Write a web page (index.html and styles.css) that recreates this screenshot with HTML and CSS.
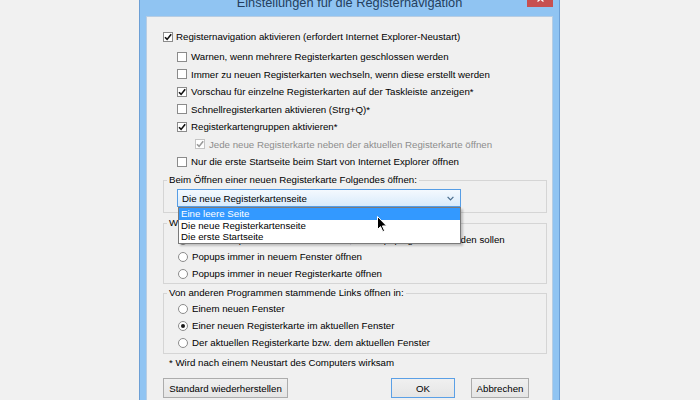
FILE: index.html
```html
<!DOCTYPE html>
<html lang="de">
<head>
    <meta charset="UTF-8">
    <title>Einstellungen für die Registernavigation</title>
    <link rel="stylesheet" href="styles.css">
</head>
<body>
    <div class="window">
        <div class="titlebar">
            <span></span>
            <h1 class="title">Einstellungen für die Registernavigation</h1>
            <span class="close">
                <svg width="7" height="6" viewBox="0 0 7 6"><path d="M0.5 0.5 L6.5 5.5 M6.5 0.5 L0.5 5.5" stroke="#fff" stroke-width="1.3"/></svg>
            </span>
        </div>

        <div class="panel">
            <ul class="options">
                <li class="opt first">
                    <span class="box"><svg width="8" height="8" viewBox="0 0 8 8"><path d="M1 4.2 L3.1 6.4 L7.2 1.2" /></svg></span>
                    Registernavigation aktivieren (erfordert Internet Explorer-Neustart)
                </li>
                <li class="opt sub"><span class="box"></span>Warnen, wenn mehrere Registerkarten geschlossen werden</li>
                <li class="opt sub"><span class="box"></span>Immer zu neuen Registerkarten wechseln, wenn diese erstellt werden</li>
                <li class="opt sub">
                    <span class="box"><svg width="8" height="8" viewBox="0 0 8 8"><path d="M1 4.2 L3.1 6.4 L7.2 1.2" /></svg></span>
                    Vorschau für einzelne Registerkarten auf der Taskleiste anzeigen*
                </li>
                <li class="opt sub"><span class="box"></span>Schnellregisterkarten aktivieren (Strg+Q)*</li>
                <li class="opt sub">
                    <span class="box"><svg width="8" height="8" viewBox="0 0 8 8"><path d="M1 4.2 L3.1 6.4 L7.2 1.2" /></svg></span>
                    Registerkartengruppen aktivieren*
                </li>
                <li class="opt subsub disabled">
                    <span class="box"><svg width="8" height="8" viewBox="0 0 8 8"><path d="M1 4.2 L3.1 6.4 L7.2 1.2" /></svg></span>
                    Jede neue Registerkarte neben der aktuellen Registerkarte öffnen
                </li>
                <li class="opt sub"><span class="box"></span>Nur die erste Startseite beim Start von Internet Explorer öffnen</li>
            </ul>

            <fieldset class="group tabs">
                <legend>Beim Öffnen einer neuen Registerkarte Folgendes öffnen:</legend>
                <div class="combo">
                    <div class="select">
                        <span>Die neue Registerkartenseite</span>
                        <svg width="7" height="5" viewBox="0 0 7 5"><path d="M0.6 0.8 L3.5 3.8 L6.4 0.8" /></svg>
                    </div>
                    <ul class="dropdown">
                        <li class="active">Eine leere Seite</li>
                        <li>Die neue Registerkartenseite</li>
                        <li>Die erste Startseite</li>
                    </ul>
                    <!-- Mauszeiger -->
                    <svg class="cursor" width="11" height="17" viewBox="0 0 11 17">
                        <path d="M0.5 0.5 L0.5 13.5 L3.5 10.6 L5.8 15.6 L7.6 14.8 L5.4 9.9 L9.6 9.9 Z" />
                    </svg>
                </div>
            </fieldset>

            <fieldset class="group popups">
                <legend>Wenn ein Popup auftritt:</legend>
                <div class="radio-row"><span class="radio checked"></span>Internet Explorer entscheiden lassen, wie Popups geöffnet werden sollen</div>
                <div class="radio-row"><span class="radio"></span>Popups immer in neuem Fenster öffnen</div>
                <div class="radio-row"><span class="radio"></span>Popups immer in neuer Registerkarte öffnen</div>
            </fieldset>

            <fieldset class="group links">
                <legend>Von anderen Programmen stammende Links öffnen in:</legend>
                <div class="radio-row"><span class="radio"></span>Einem neuen Fenster</div>
                <div class="radio-row"><span class="radio checked"></span>Einer neuen Registerkarte im aktuellen Fenster</div>
                <div class="radio-row"><span class="radio"></span>Der aktuellen Registerkarte bzw. dem aktuellen Fenster</div>
            </fieldset>

            <p class="note">* Wird nach einem Neustart des Computers wirksam</p>

            <div class="buttons">
                <button class="btn std">Standard wiederherstellen</button>
                <button class="btn ok">OK</button>
                <button class="btn cancel">Abbrechen</button>
            </div>
        </div>
    </div>
</body>
</html>
```

FILE: styles.css
```css
body {
    margin: 0;
    background: #f1f1f1;
    font-family: "Liberation Sans", Arial, sans-serif;
    font-size: 9.7px;
    color: #000;
    overflow: hidden;
}

/* Fensterrahmen */

.window {
    width: 421px;
    box-sizing: border-box;
    margin: -14px 0 0 139px;
    padding: 0 6px;
    background: #90c4f2;
    border: 1px solid #6c9fd5;
}

.titlebar {
    height: 29px;
    display: grid;
    grid-template-columns: 1fr auto 1fr;
    align-items: center;
}

.title {
    margin: 0;
    padding-top: 1px;
    font-size: 12.8px;
    font-weight: normal;
    line-height: 13px;
    color: #243f5e;
    white-space: nowrap;
}

.close {
    justify-self: end;
    align-self: end;
    width: 26px;
    height: 17px;
    margin-bottom: 9px;
    background: #c75050;
    display: flex;
    justify-content: center;
    align-items: center;
}

.panel {
    background: #f0f0f0;
    border: 1px solid #b7cde3;
    border-bottom: 0;
    padding: 11px 5px 20px 16px;
}

/* Checkboxen */

.options {
    list-style: none;
    margin: 0;
    padding: 0;
}

.opt {
    height: 17.5px;
    display: flex;
    align-items: center;
    gap: 4px;
    white-space: nowrap;

    &.first {
        margin-bottom: 2.5px;
        gap: 3px;
    }
    &.sub {
        padding-left: 14px;
    }
    &.subsub {
        padding-left: 32px;
    }
    &.disabled {
        color: #8d8d8d;

        .box {
            border-color: #c4c4c4;
        }
        .box path {
            stroke: #9a9a9a;
        }
    }
}

.box {
    width: 10px;
    height: 10px;
    box-sizing: border-box;
    flex: none;
    border: 1px solid #8b8b8b;
    background: #fff;
    display: flex;
    justify-content: center;
    align-items: center;

    path {
        fill: none;
        stroke: #111;
        stroke-width: 1.6;
    }
}

/* Gruppen */

.group {
    margin: 3.5px 0 0;
    padding: 3px 3px 5px;
    border: 1px solid #d5d5d5;
    min-inline-size: 0;

    legend {
        padding: 0 2px;
        line-height: 12px;
    }

    &.popups {
        margin-top: 4px;
        padding: 2px 3px 1px;
    }
    &.links {
        margin-top: 3px;
        padding: 1px 3px 2px;
    }
}

.combo {
    position: relative;
    width: 284px;
    margin-left: 10px;
}

.select {
    height: 18px;
    box-sizing: border-box;
    border: 1px solid #569de5;
    background: linear-gradient(#f4f9fe, #d9ebfb);
    display: flex;
    justify-content: space-between;
    align-items: center;
    padding: 0 6px 0 4px;

    path {
        fill: none;
        stroke: #4a6c8c;
        stroke-width: 1.2;
    }
}

.dropdown {
    position: absolute;
    top: 100%;
    left: 1px;
    right: 0;
    margin: 0;
    padding: 0;
    list-style: none;
    background: #fff;
    border: 1px solid #7a7a7a;
    box-shadow: 2px 2px 2px rgba(0, 0, 0, 0.2);

    li {
        line-height: 11.7px;
        padding: 0 2px;
    }

    .active {
        background: #3399ff;
        color: #fff;
    }
}

.cursor {
    position: absolute;
    left: 200px;
    top: 27px;

    path {
        fill: #000;
        stroke: #fff;
        stroke-width: 1;
    }
}

.radio-row {
    height: 17px;
    margin-left: 11px;
    display: flex;
    align-items: center;
    gap: 4px;
    white-space: nowrap;
}

.radio {
    width: 10px;
    height: 10px;
    box-sizing: border-box;
    flex: none;
    border: 1px solid #8b8b8b;
    border-radius: 50%;
    background: #fff;
    display: flex;
    justify-content: center;
    align-items: center;

    &.checked::after {
        content: "";
        width: 4px;
        height: 4px;
        border-radius: 50%;
        background: #1a1a1a;
    }
}

.note {
    margin: 3px 0 0 6px;
    line-height: 12px;
}

/* Knöpfe */

.buttons {
    display: flex;
    gap: 16px;
    margin: 9px 18px 0 0;
}

.btn {
    height: 20px;
    padding: 0;
    font: inherit;
    color: #000;
    background: linear-gradient(#f0f0f0, #e5e5e5);
    border: 1px solid #acacac;

    &.std {
        width: 125px;
        margin-right: auto;
    }
    &.ok {
        width: 64px;
        border-color: #5ba0e6;
    }
    &.cancel {
        width: 58px;
    }
}
```
